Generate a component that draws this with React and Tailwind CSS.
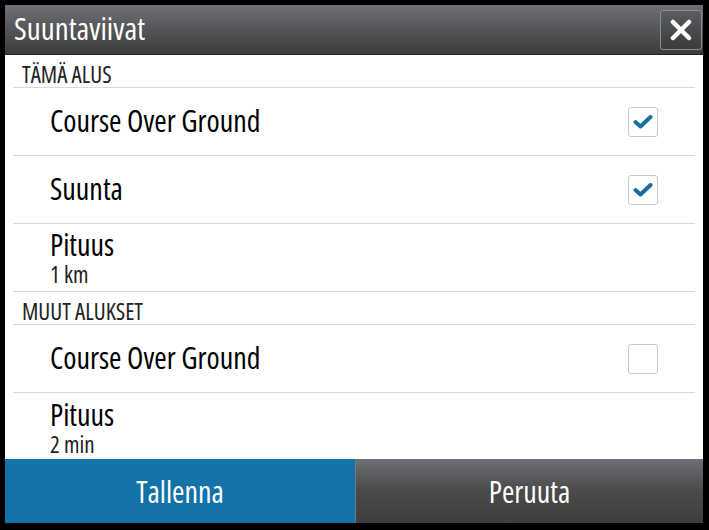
import React from 'react';

const font = { fontFamily: '"Open Sans", "Liberation Sans", sans-serif', fontStretch: '75%' };

const Check = ({ checked }) => (
  <div className="w-[30px] h-[30px] rounded-[3px] border border-[#c8c8c8] bg-white flex items-center justify-center">
    {checked && (
      <svg width="20" height="16" viewBox="0 0 20 16">
        <path d="M2.5 8 L7.5 12.5 L17.5 3" fill="none" stroke="#1a6e9e" strokeWidth="4" strokeLinecap="round" strokeLinejoin="round" />
      </svg>
    )}
  </div>
);

const Section = ({ title }) => (
  <div className="h-[33px] mx-[8px] border-b border-[#e3d3da] flex items-end pb-[1px] pl-[9px] text-[23px] leading-none text-[#222]">
    {title}
  </div>
);

const Row = ({ label, value, checked, last }) => (
  <div className={`h-[68px] mx-[8px] flex items-center justify-between pl-[37px] pr-[37px] ${last ? '' : 'border-b border-[#e3d3da]'}`}>
    <div className={`flex flex-col ${value ? 'pt-[2px]' : 'pb-[1px]'}`}>
      <span className="text-[30px] leading-[30px] text-black">{label}</span>
      {value && <span className="text-[23px] leading-[26px] pt-[1px] text-[#222]">{value}</span>}
    </div>
    {checked !== undefined && <Check checked={checked} />}
  </div>
);

export default function App() {
  return (
    <div className="w-[709px] h-[530px] bg-black pt-[5px] pl-[5px] pr-[6px] pb-[7px]" style={font}>
      <div className="h-[50px] bg-gradient-to-b from-[#6d7075] to-[#3c3c3c] border-b border-[#222] flex items-center justify-between pl-[9px] pr-[1px]">
        <span className="text-[31px] text-white leading-none pb-[2px]">Suuntaviivat</span>
        <button className="w-[42px] h-[40px] rounded-[3px] border border-[#8a8d92] bg-gradient-to-b from-[#5a5d62] to-[#3a3a3a] flex items-center justify-center">
          <svg width="22" height="22" viewBox="0 0 22 22">
            <path d="M3 3 L19 19 M19 3 L3 19" stroke="white" strokeWidth="4.5" strokeLinecap="round" />
          </svg>
        </button>
      </div>
      <div className="h-[404px] bg-white overflow-hidden">
        <Section title="TÄMÄ ALUS" />
        <Row label="Course Over Ground" checked={true} />
        <Row label="Suunta" checked={true} />
        <Row label="Pituus" value="1 km" />
        <Section title="MUUT ALUKSET" />
        <Row label="Course Over Ground" checked={false} />
        <Row label="Pituus" value="2 min" last />
      </div>
      <div className="h-[64px] flex">
        <button className="w-[350px] bg-[#1372a8] text-white text-[30px] flex items-center justify-center">Tallenna</button>
        <button className="flex-1 border-l border-[#777] bg-gradient-to-b from-[#6c6f74] via-[#4a4a4a] to-[#3e3e3e] text-white text-[30px] flex items-center justify-center">Peruuta</button>
      </div>
    </div>
  );
}
